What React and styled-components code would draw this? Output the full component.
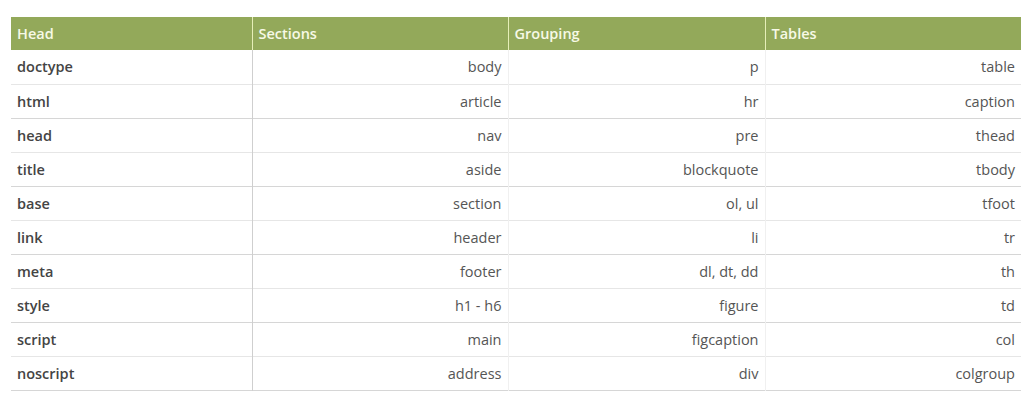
import React from "react";
import styled, { createGlobalStyle } from "styled-components";

const Global = createGlobalStyle`
  body {
    margin: 0;
    background: #fff;
    font-family: "Open Sans", "Noto Sans", sans-serif;
  }
`;

const Page = styled.div`
  padding: 17px 0 0 11px;
`;

const Table = styled.table`
  border-collapse: collapse;
  width: 1010px;
  table-layout: fixed;
  font-size: 14.5px;
`;

const Th = styled.th`
  background: #93a95a;
  color: #f7f9e6;
  font-weight: 600;
  text-align: left;
  height: 33px;
  padding: 0 6px;
  border-left: 1px solid #e6eeb8;
  &:first-child {
    border-left: none;
  }
`;

const Row = styled.tr`
  height: 34px;
  border-bottom: 1px solid ${(p) => (p.$dark ? "#d6d6d6" : "#e6e6e6")};
`;

const Td = styled.td`
  padding: 0 6px;
  color: ${(p) => (p.$bold ? "#444" : "#555")};
  text-align: ${(p) => (p.$bold ? "left" : "right")};
  font-weight: ${(p) => (p.$bold ? 600 : 400)};
  border-left: 1px solid ${(p) => p.$line || "#f0f0f0"};
  &:first-child {
    border-left: none;
  }
`;

const rows = [
  ["doctype", "body", "p", "table"],
  ["html", "article", "hr", "caption"],
  ["head", "nav", "pre", "thead"],
  ["title", "aside", "blockquote", "tbody"],
  ["base", "section", "ol, ul", "tfoot"],
  ["link", "header", "li", "tr"],
  ["meta", "footer", "dl, dt, dd", "th"],
  ["style", "h1 - h6", "figure", "td"],
  ["script", "main", "figcaption", "col"],
  ["noscript", "address", "div", "colgroup"],
];

export default function App() {
  return (
    <Page>
      <Global />
      <Table>
        <colgroup>
          <col style={{ width: 241 }} />
          <col style={{ width: 256 }} />
          <col style={{ width: 257 }} />
          <col />
        </colgroup>
        <thead>
          <tr>
            <Th>Head</Th>
            <Th>Sections</Th>
            <Th>Grouping</Th>
            <Th>Tables</Th>
          </tr>
        </thead>
        <tbody>
          {rows.map((r, i) => (
            <Row key={r[0]} $dark={i % 2 === 1 || i === rows.length - 1}>
              <Td $bold>{r[0]}</Td>
              <Td $line="#cfcfcf">{r[1]}</Td>
              <Td>{r[2]}</Td>
              <Td>{r[3]}</Td>
            </Row>
          ))}
        </tbody>
      </Table>
    </Page>
  );
}
